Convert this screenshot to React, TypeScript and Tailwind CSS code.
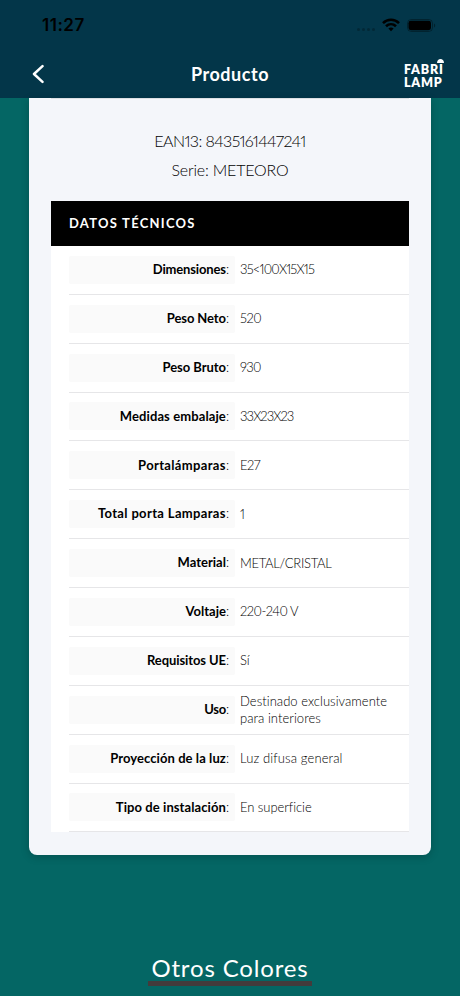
import React from 'react'

interface Spec {
  label: string
  value: string
  labelClass?: string
  valueClass?: string
}

const specs: Spec[] = [
  { label: 'Dimensiones', value: '35<100X15X15', labelClass: 'tracking-[-0.150px]', valueClass: 'tracking-[-0.8px]' },
  { label: 'Peso Neto', value: '520', labelClass: 'tracking-[-0.1px]', valueClass: 'tracking-[-0.5px]' },
  { label: 'Peso Bruto', value: '930', labelClass: 'tracking-[-0.050px]', valueClass: 'tracking-[-0.7px]' },
  { label: 'Medidas embalaje', value: '33X23X23', labelClass: 'tracking-[0.1px]', valueClass: 'tracking-[-0.9px]' },
  { label: 'Portalámparas', value: 'E27', labelClass: 'tracking-[0.350px]', valueClass: 'tracking-[-0.5px]' },
  { label: 'Total porta Lamparas', value: '1', labelClass: 'tracking-[0.350px]' },
  { label: 'Material', value: 'METAL/CRISTAL', valueClass: 'tracking-[-0.3px]' },
  { label: 'Voltaje', value: '220-240 V', valueClass: 'tracking-[-0.5px]' },
  { label: 'Requisitos UE', value: 'Sí', labelClass: 'tracking-[-0.1px]' },
  { label: 'Uso', value: 'Destinado exclusivamente para interiores', labelClass: 'tracking-[-0.3px]', valueClass: 'tracking-[0.040px]' },
  { label: 'Proyección de la luz', value: 'Luz difusa general', labelClass: 'tracking-[0.080px]', valueClass: 'tracking-[0.120px]' },
  { label: 'Tipo de instalación', value: 'En superficie', labelClass: 'tracking-[0.080px]', valueClass: 'tracking-[-0.050px]' }
]

function StatusBar() {
  return (
    <div className="flex h-[50px] items-center justify-between pl-[42px] pr-[24px] text-black">
      <span className="font-['Inter',sans-serif] text-[17px] font-semibold leading-none tracking-[0.5px]">11:27</span>
      <div className="flex items-center">
        {/* No signal */}
        <div className="mt-[9px] flex gap-[2px] opacity-25">
          <span className="size-[3px] rounded-full bg-black" />
          <span className="size-[3px] rounded-full bg-black" />
          <span className="size-[3px] rounded-full bg-black" />
          <span className="size-[3px] rounded-full bg-black" />
        </div>
        <svg className="ml-[7px] h-[14px] w-[18px]" viewBox="0 0 18 14" fill="none" stroke="currentColor" strokeWidth="2.6">
          <path d="M1 5.1C5.5.7 12.5.7 17 5.1" />
          <path d="M4 8.3C6.9 5.5 11.1 5.5 14 8.3" />
          <path d="M6.4 10.5C7.9 9.2 10.1 9.2 11.6 10.5L9 13.3Z" fill="currentColor" stroke="none" />
        </svg>
        <svg className="ml-[7px] h-[13px] w-[29px]" viewBox="0 0 29 13">
          <rect x="0.5" y="0.5" width="25" height="12" rx="3.8" fill="none" stroke="#000" strokeOpacity=".35" />
          <rect x="1.5" y="1.8" width="22.5" height="9.4" rx="2.4" fill="#000" />
          <path d="M27 4.5C28.6 5.2 28.6 7.8 27 8.5Z" fill="#000" fillOpacity=".4" />
        </svg>
      </div>
    </div>
  )
}

function Logo() {
  return (
    <div className="relative w-[40px] pt-[4px] font-extrabold text-white">
      <svg className="absolute right-0 -top-[1px] h-[4px] w-[7px]" viewBox="0 0 7 4" fill="#fff">
        <path d="M0 4C0 -1.3 7 -1.3 7 4Z" />
      </svg>
      <div className="h-[12px] whitespace-nowrap text-[12.5px] leading-[12px] tracking-[0.8px]">FABRI</div>
      <div className="mt-px h-[12px] whitespace-nowrap text-[12.5px] leading-[12px] tracking-[0.8px]">LAMP</div>
    </div>
  )
}

function NavBar() {
  return (
    <div className="grid h-12 grid-cols-[80px_1fr_80px] items-center text-white">
      <button className="pl-[32px]">
        <svg className="h-[20px] w-[12px]" viewBox="0 0 12 20" fill="none" stroke="currentColor" strokeWidth="2.5" strokeLinecap="round" strokeLinejoin="round">
          <path d="M10.5 2.2L2 10L10.5 17.8" />
        </svg>
      </button>
      <h1 className="text-center text-[18px] font-bold tracking-[0.550px]">Producto</h1>
      <div className="flex justify-end pr-[16px]">
        <Logo />
      </div>
    </div>
  )
}

function SpecRow({ label, value, labelClass = '', valueClass = '' }: Spec) {
  return (
    <div className="ml-[18px] flex h-[48.880px] items-center border-b border-[#e6e6e8]">
      <div className="flex h-[28px] w-[166px] items-center justify-end rounded-[2px] bg-[#fafafa] pr-[6px] text-[13px] text-black">
        <span className={`font-bold ${labelClass}`}>{label}</span>
        <span className="font-light">:</span>
      </div>
      <div className={`w-[160px] pl-[5px] text-[13px] font-light leading-[17px] text-black ${valueClass}`}>{value}</div>
    </div>
  )
}

export default function App() {
  return (
    <div className="flex h-[996px] w-[460px] flex-col overflow-hidden bg-[#046664] font-['Lato',sans-serif] proportional-nums [font-variant-ligatures:none]">
      <header className="h-[98px] shrink-0 bg-[#033649]">
        <StatusBar />
        <NavBar />
      </header>

      <main className="mx-[29px] h-[756.5px] shrink-0 rounded-b-[8px] bg-[#f4f6fa] px-[22px] shadow-[0_2px_8px_rgba(0,0,0,0.2)]">
        <div className="h-px bg-[#dcdfe3]" />
        <div className="pt-[27px] text-center text-[16px] font-light leading-[29px] text-black">
          <p className="tracking-[-0.6px]">EAN13: 8435161447241</p>
          <p className="tracking-[-0.2px]">Serie: METEORO</p>
        </div>
        <section className="mt-[17.400px] bg-white">
          <h2 className="flex h-[44.500px] items-center bg-black pl-[18px] text-[13px] font-bold tracking-[1.250px] text-white">DATOS TÉCNICOS</h2>
          {specs.map((spec) => (
            <SpecRow key={spec.label} {...spec} />
          ))}
        </section>
      </main>

      <div className="mt-[97.500px] flex justify-center">
        <h2 className="h-[34px] w-[164px] whitespace-nowrap border-b-[5px] border-[#433b3c] text-center text-[24px] leading-[31px] tracking-[0.850px] text-white">Otros Colores</h2>
      </div>
    </div>
  )
}
